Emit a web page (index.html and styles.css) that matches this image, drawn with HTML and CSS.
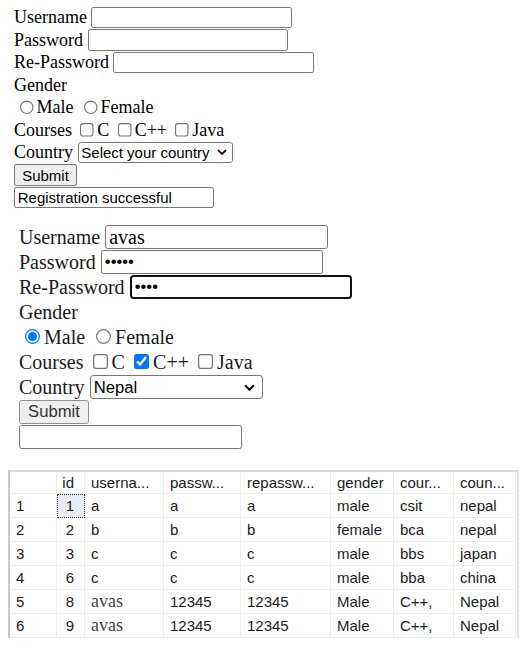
FILE: index.html
```html
<!DOCTYPE html>
<html>
<head>
<meta charset="utf-8">
<link rel="stylesheet" href="styles.css">
</head>
<body>
<form class="form f1">
  <div class="row">Username <input class="txt" type="text"></div>
  <div class="row">Password <input class="txt" type="password"></div>
  <div class="row">Re-Password <input class="txt" type="password"></div>
  <div class="row">Gender</div>
  <div class="row"><input type="radio" class="rad" name="g1">Male <input type="radio" class="rad" name="g1">Female</div>
  <div class="row">Courses <input type="checkbox" class="chk">C <input type="checkbox" class="chk">C++ <input type="checkbox" class="chk">Java</div>
  <div class="row">Country <select class="sel"><option>Select your country</option><option>Nepal</option></select></div>
  <div class="row"><button type="button" class="btn">Submit</button></div>
  <div class="row"><input class="txt" type="text" value="Registration successful"></div>
</form>

<form class="form f2">
  <div class="row">Username <input class="txt serif-val" type="text" value="avas"></div>
  <div class="row">Password <input class="txt" type="password" value="12345"></div>
  <div class="row">Re-Password <input class="txt focused" type="password" value="1234"></div>
  <div class="row">Gender</div>
  <div class="row"><input type="radio" class="rad" name="g2" checked>Male <input type="radio" class="rad" name="g2">Female</div>
  <div class="row">Courses <input type="checkbox" class="chk">C <input type="checkbox" class="chk" checked>C++ <input type="checkbox" class="chk">Java</div>
  <div class="row">Country <select class="sel"><option>Nepal</option><option>Select your country</option></select></div>
  <div class="row"><button type="button" class="btn btn-soft">Submit</button></div>
  <div class="row"><input class="txt" type="text"></div>
</form>

<div class="grid-wrap">
  <table class="grid">
    <colgroup>
      <col class="w-rh"><col class="w-id"><col class="w-user"><col class="w-pass"><col class="w-repass"><col class="w-gender"><col class="w-course"><col class="w-country">
    </colgroup>
    <thead>
      <tr><th class="rh"></th><th class="num">id</th><th>userna...</th><th>passw...</th><th>repassw...</th><th>gender</th><th>cour...</th><th>coun...</th></tr>
    </thead>
    <tbody>
      <tr><td class="rh">1</td><td class="num focus-cell">1</td><td>a</td><td>a</td><td>a</td><td>male</td><td>csit</td><td>nepal</td></tr>
      <tr><td class="rh">2</td><td class="num">2</td><td>b</td><td>b</td><td>b</td><td>female</td><td>bca</td><td>nepal</td></tr>
      <tr><td class="rh">3</td><td class="num">3</td><td>c</td><td>c</td><td>c</td><td>male</td><td>bbs</td><td>japan</td></tr>
      <tr><td class="rh">4</td><td class="num">6</td><td>c</td><td>c</td><td>c</td><td>male</td><td>bba</td><td>china</td></tr>
      <tr><td class="rh">5</td><td class="num">8</td><td class="serif">avas</td><td>12345</td><td>12345</td><td>Male</td><td>C++,</td><td>Nepal</td></tr>
      <tr><td class="rh">6</td><td class="num">9</td><td class="serif">avas</td><td>12345</td><td>12345</td><td>Male</td><td>C++,</td><td>Nepal</td></tr>
    </tbody>
  </table>
</div>
</body>
</html>
```

FILE: styles.css
```css
body {
  margin: 0;
  background: #fff;
  color: #000;
  font-family: "Liberation Serif", "Times New Roman", serif;
}

.form {
  font-size: 16px;
  margin: 0;
}

.f1 {
  zoom: 1.125;
  margin: 5.56px 0 0 12.44px;
}

.f2 {
  zoom: 1.25;
  margin: 12.6px 0 0 15.2px;
  color: #1a1a1a;
}

.row {
  height: 20px;
  line-height: 20px;
  white-space: nowrap;
}

.txt {
  box-sizing: border-box;
  width: 178px;
  height: 19.5px;
  margin: 0.25px 0 0;
  vertical-align: top;
  border: 1px solid #767676;
  border-radius: 2px;
  padding: 0 2.5px;
  font: 13.33px "Liberation Sans", Arial, sans-serif;
  color: #000;
  background: #fff;
  outline: none;
}

.serif-val {
  font: 16px "Liberation Serif", "Times New Roman", serif;
}

.focused {
  border: 1.6px solid #111;
  border-radius: 3px;
}

.rad,
.chk {
  width: 12.5px;
  height: 12.5px;
  vertical-align: top;
}

.rad {
  margin: 3.75px 2.5px 0 5px;
}

.chk {
  margin: 3.75px 2.5px 0 3.5px;
}

.sel {
  appearance: none;
  -webkit-appearance: none;
  box-sizing: border-box;
  width: 138.5px;
  height: 18.5px;
  margin: 0.75px 0 0;
  vertical-align: top;
  border: 1px solid #767676;
  border-radius: 2.5px;
  padding: 0 14px 0 2.5px;
  font: 13.33px "Liberation Sans", Arial, sans-serif;
  color: #000;
  background: #fff url("data:image/svg+xml,%3Csvg xmlns='http://www.w3.org/2000/svg' viewBox='0 0 10 6'%3E%3Cpath d='M1 1l4 4 4-4' fill='none' stroke='%23000' stroke-width='1.8'/%3E%3C/svg%3E") no-repeat right 5px center / 9px 5.5px;
}

.btn {
  box-sizing: border-box;
  width: 56px;
  height: 19.5px;
  margin: 0.25px 0 0;
  vertical-align: top;
  border: 1px solid #767676;
  border-radius: 2px;
  background: #efefef;
  padding: 0;
  font: 13.33px "Liberation Sans", Arial, sans-serif;
  color: #000;
}

.btn-soft {
  border-color: #8f8f8f;
  color: #333;
}

.grid-wrap {
  box-sizing: border-box;
  width: 511px;
  margin: 20.5px 0 0 8px;
  border-top: 2px solid #dadada;
  border-left: 2px solid #c9c9c9;
  border-right: 2px solid #e4e4e4;
}

.grid {
  border-collapse: separate;
  border-spacing: 0;
  table-layout: fixed;
  width: 506px;
  font: 15px "Liberation Sans", Arial, sans-serif;
  color: #1a1a1a;
}

.w-rh { width: 47px; }
.w-id { width: 28px; }
.w-user { width: 79px; }
.w-pass { width: 77px; }
.w-repass { width: 90px; }
.w-gender { width: 63px; }
.w-course { width: 60px; }
.w-country { width: 62px; }

.grid th,
.grid td {
  box-sizing: border-box;
  height: 24px;
  padding: 0 0 0 6px;
  border-right: 1px solid #ececec;
  border-bottom: 1px solid #ececec;
  text-align: left;
  font-weight: normal;
  white-space: nowrap;
  overflow: hidden;
  vertical-align: middle;
}

.grid th {
  height: 22px;
}

.grid .rh {
  padding-left: 6px;
}

.grid .num {
  text-align: right;
  padding: 0 10px 0 0;
}

.grid .focus-cell {
  background: #e8ecf1;
  outline: 1px dotted #333;
  outline-offset: -1px;
}

.grid .serif {
  font: 18px "Liberation Serif", "Times New Roman", serif;
  color: #444;
}
```
